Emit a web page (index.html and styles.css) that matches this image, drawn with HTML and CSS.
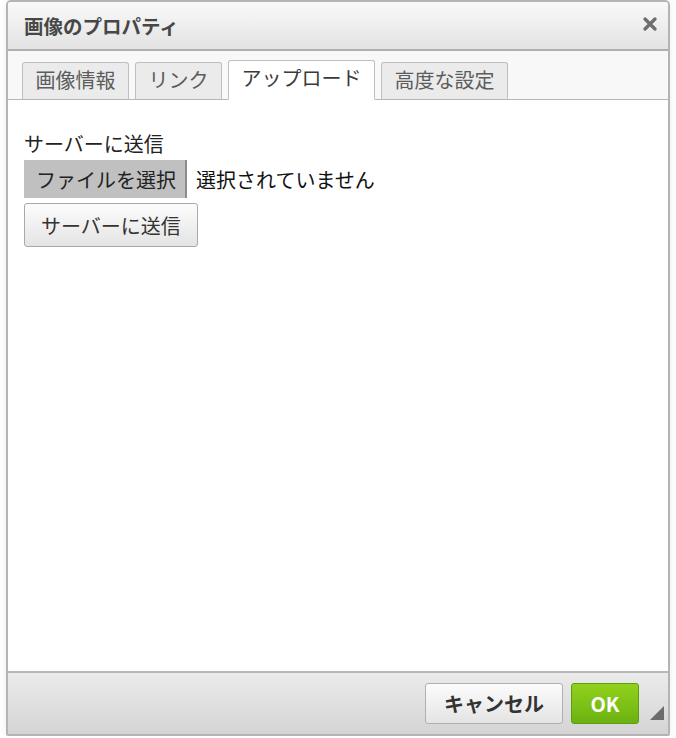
FILE: index.html
```html
<!DOCTYPE html>
<html lang="ja">
<head>
    <meta charset="utf-8">
    <title>画像のプロパティ</title>
    <link rel="stylesheet" href="styles.css">
</head>
<body>
<div class="dialog">
    <div class="dialog-title">
        <span>画像のプロパティ</span>
        <svg class="close" width="16" height="16" viewBox="0 0 16 16">
            <path d="M3 3 L13 13 M13 3 L3 13" stroke="#6e6e6e" stroke-width="3.4" stroke-linecap="round"/>
        </svg>
    </div>
    <div class="tabs">
        <div class="tab">画像情報</div>
        <div class="tab">リンク</div>
        <div class="tab active">アップロード</div>
        <div class="tab">高度な設定</div>
    </div>
    <div class="dialog-body">
        <div class="label">サーバーに送信</div>
        <div class="file-row">
            <span class="file-btn">ファイルを選択</span>
            <span class="file-name">選択されていません</span>
        </div>
        <button class="btn send">サーバーに送信</button>
    </div>
    <div class="dialog-footer">
        <button class="btn cancel">キャンセル</button>
        <button class="btn ok">OK</button>
        <span class="resize"></span>
    </div>
</div>
</body>
</html>
```

FILE: styles.css
```css
* {
    box-sizing: border-box;
}

body {
    margin: 0;
    background: #fff;
    font-family: "Noto Sans CJK JP", "Liberation Sans", sans-serif;
    color: #222;
}

.dialog {
    margin-left: 6px;
    width: 664px;
    height: 736px;
    border: 2px solid #b4b4b4;
    border-radius: 5px 5px 2px 2px;
    display: flex;
    flex-direction: column;
    box-shadow: 0 0 8px rgba(0, 0, 0, 0.08);
    overflow: hidden;
}

.dialog-title {
    height: 49px;
    flex: none;
    display: flex;
    align-items: center;
    justify-content: space-between;
    padding: 0 10px 0 16px;
    background: linear-gradient(#f9f9f9, #e3e3e3);
    border-bottom: 2px solid #b0b0b0;
    font-size: 19.5px;
    font-weight: bold;
    color: #474747;
}

.close {
    margin-top: -4px;
}

.tabs {
    height: 49px;
    flex: none;
    display: flex;
    align-items: flex-end;
    gap: 6px;
    padding-left: 14px;
    background: #f8f8f8;
    border-bottom: 1px solid #b6b6b6;
}

.tab {
    height: 38px;
    margin-bottom: -1px;
    padding: 0 12.5px 3px;
    display: flex;
    align-items: center;
    background: #ebebeb;
    border: 1px solid #bfbfbf;
    border-bottom: 1px solid #b6b6b6;
    border-radius: 3px 3px 0 0;
    font-size: 20px;
    color: #5c5c5c;
}

.tab.active {
    height: 40px;
    padding-bottom: 5px;
    background: #fff;
    border-bottom-color: #fff;
    color: #3a3a3a;
}

.dialog-body {
    flex: 1;
    background: #fff;
    padding: 32px 16px 0;
}

.label {
    font-size: 20px;
    line-height: 24px;
    color: #222;
}

.file-row {
    display: flex;
    align-items: center;
    height: 38px;
    margin-top: 4px;
}

.file-btn {
    height: 38px;
    display: flex;
    align-items: center;
    padding: 0 9px 0 12px;
    background: #c0c0c0;
    border-right: 2px solid #8c8c8c;
    font-size: 20px;
    color: #222;
}

.file-name {
    margin-left: 9px;
    font-size: 20px;
    color: #111;
}

.btn {
    font-family: inherit;
    font-size: 20px;
    height: 44px;
    border: 1px solid #a9a9a9;
    border-radius: 3px;
    background: linear-gradient(#fcfcfc, #e4e4e4);
    color: #333;
    cursor: pointer;
}

.send {
    margin-top: 5px;
    padding: 0 16px;
}

.dialog-footer {
    height: 63px;
    flex: none;
    display: flex;
    align-items: center;
    justify-content: flex-end;
    gap: 8px;
    padding-right: 29px;
    background: linear-gradient(#ebebeb, #d4d4d4);
    border-top: 2px solid #b8b8b8;
    position: relative;
}

.cancel {
    width: 138px;
    height: 41px;
    padding: 0;
    font-weight: bold;
    color: #333;
    border-color: #b0b0b0;
}

.ok {
    width: 68px;
    height: 41px;
    padding: 0;
    font-weight: bold;
    color: #fff;
    background: linear-gradient(#92d21c, #6bb112);
    border-color: #5b9c10;
}

.resize {
    position: absolute;
    right: 4px;
    bottom: 14px;
    width: 0;
    height: 0;
    border-left: 14px solid transparent;
    border-bottom: 14px solid #6c6c6c;
}
```
